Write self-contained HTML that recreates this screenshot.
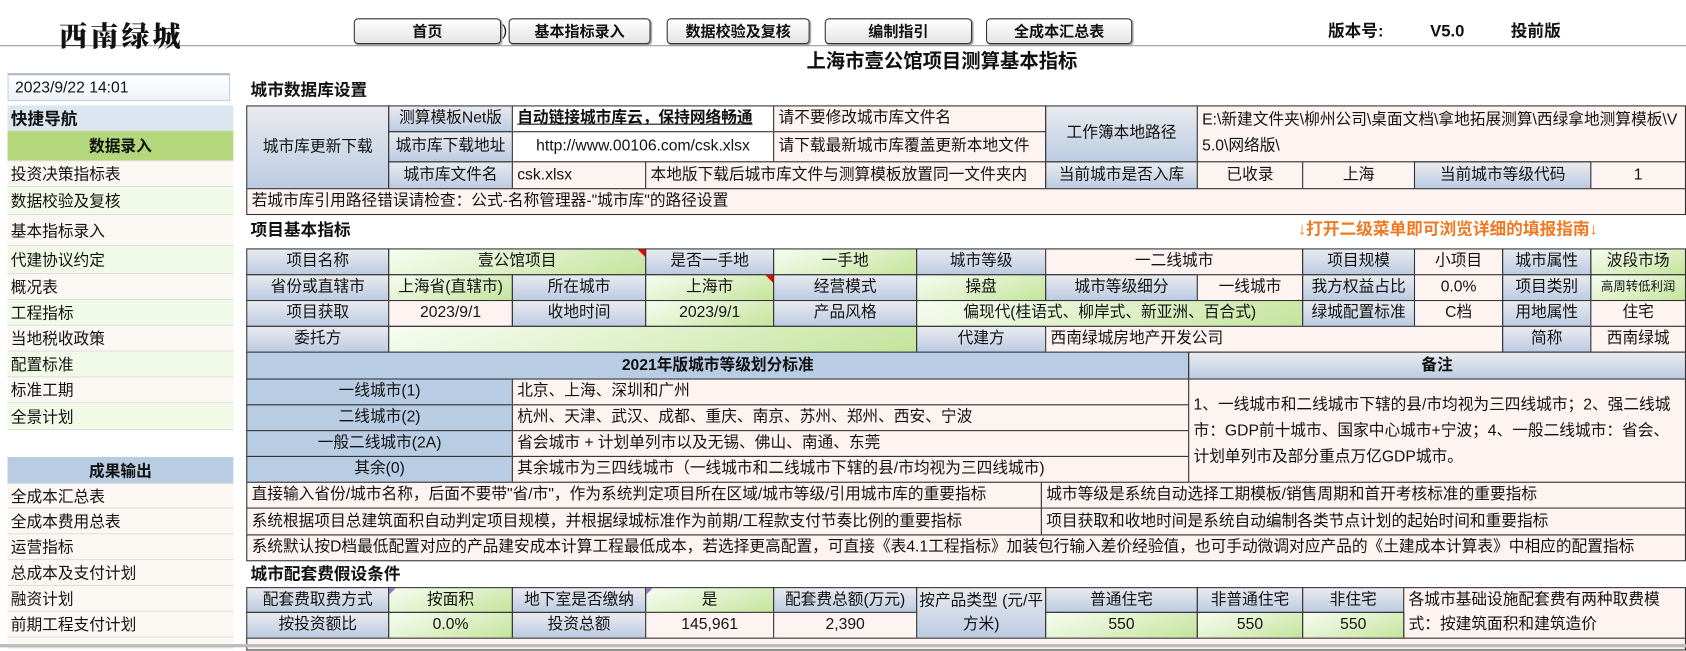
<!DOCTYPE html>
<html><head><meta charset="utf-8">
<style>
html,body{margin:0;padding:0;background:#fff;}
body{width:1686px;height:647px;overflow:hidden;position:relative;}
#w{position:absolute;left:0;top:0;width:1568px;height:602px;transform:scale(1.07526);transform-origin:0 0;font-family:"Liberation Sans","Noto Sans CJK SC",sans-serif;font-size:14.6px;color:#111;}
.c{position:absolute;box-sizing:border-box;border:1px solid #333;display:flex;align-items:center;justify-content:center;white-space:nowrap;overflow:hidden;line-height:1.15;}
.l{justify-content:flex-start;padding-left:4px;}
.h{background:linear-gradient(#e9ebef,#bccbe2);}
.b{background:#b8cce4;}
.v{background:#fdf4f2;}
.w{background:#fff;}
.g{background:linear-gradient(160deg,#f7fcf1 0%,#dff1c9 50%,#c3e49b 100%);}
.t{position:absolute;font-weight:bold;font-size:15.5px;white-space:nowrap;line-height:20px;}
.btn{position:absolute;top:17px;height:24px;box-sizing:border-box;border:1px solid #333;border-radius:4px;background:linear-gradient(#fff,#e4e4e4);display:flex;align-items:center;justify-content:center;font-size:14px;font-weight:bold;box-shadow:1px 1px 1px #999;}
.n{position:absolute;left:7px;width:210px;box-sizing:border-box;border-bottom:1px solid #ddd;padding-left:3px;display:flex;align-items:center;font-size:14.6px;}
.tri{position:absolute;width:0;height:0;border-top:7px solid #e00;border-left:7px solid transparent;}
.trp{position:absolute;width:0;height:0;border-top:6px solid #9a6fd0;border-right:6px solid transparent;}
</style></head><body><div id="w">
<div style="position:absolute;left:0;top:42px;width:1568px;height:1px;background:#999"></div>
<div style="position:absolute;left:55px;top:17px;font-family:'Noto Serif CJK SC',serif;font-weight:900;font-size:26px;letter-spacing:3px;line-height:32px">西南绿城</div>
<div class="btn" style="left:329px;width:137px">首页</div>
<div style="position:absolute;left:467px;top:20px;font-size:14px">)</div>
<div class="btn" style="left:473px;width:132px">基本指标录入</div>
<div class="btn" style="left:620px;width:133px">数据校验及复核</div>
<div class="btn" style="left:767px;width:137px">编制指引</div>
<div class="btn" style="left:917px;width:136px">全成本汇总表</div>
<div class="t" style="left:1235px;top:20px">版本号:</div>
<div class="t" style="left:1330px;top:20px">V5.0</div>
<div class="t" style="left:1405px;top:20px">投前版</div>
<div class="t" style="left:750px;top:47px;font-size:18px">上海市壹公馆项目测算基本指标</div>

<div style="position:absolute;left:7px;top:68px;width:207px;height:26px;box-sizing:border-box;border:1px solid #c5cfe0;border-top:2px solid #aab8d0;background:linear-gradient(#fff,#eef2f8);font-size:14.6px;padding:4px 0 0 6px">2023/9/22 14:01</div>
<div class="n" style="top:98px;height:24px;background:#dce6f1;font-weight:bold;font-size:15.5px">快捷导航</div>
<div class="n" style="top:122px;height:28px;background:#b3d77a;font-weight:bold;justify-content:center;padding:0">数据录入</div>
<div class="n" style="top:150px;height:24px;background:#fbf8f3">投资决策指标表</div>
<div class="n" style="top:174px;height:26px;background:#f1fae6">数据校验及复核</div>
<div class="n" style="top:200px;height:29px;background:#fbf8f3">基本指标录入</div>
<div class="n" style="top:229px;height:26px;background:#f1fae6">代建协议约定</div>
<div class="n" style="top:255px;height:24px;background:#fbf8f3">概况表</div>
<div class="n" style="top:279px;height:24px;background:#f1fae6">工程指标</div>
<div class="n" style="top:303px;height:24px;background:#fbf8f3">当地税收政策</div>
<div class="n" style="top:327px;height:24px;background:#f1fae6">配置标准</div>
<div class="n" style="top:351px;height:24px;background:#fbf8f3">标准工期</div>
<div class="n" style="top:375px;height:25px;background:#f1fae6">全景计划</div>
<div class="n" style="top:425px;height:25px;background:#b8cce4;font-weight:bold;justify-content:center;padding:0">成果输出</div>
<div class="n" style="top:450px;height:23px;background:#fbf8f3">全成本汇总表</div>
<div class="n" style="top:473px;height:24px;background:#fbf8f3">全成本费用总表</div>
<div class="n" style="top:497px;height:24px;background:#fbf8f3">运营指标</div>
<div class="n" style="top:521px;height:24px;background:#fbf8f3">总成本及支付计划</div>
<div class="n" style="top:545px;height:24px;background:#fbf8f3">融资计划</div>
<div class="n" style="top:569px;height:24px;background:#fbf8f3">前期工程支付计划</div>
<div class="n" style="top:593px;height:10px;background:#fbf8f3"></div>

<div class="t" style="left:233px;top:75px">城市数据库设置</div>
<div class="c h" style="left:229px;top:98px;width:133px;height:78px">城市库更新下载</div>
<div class="c h" style="left:361px;top:98px;width:116px;height:25px">测算模板Net版</div>
<div class="c w l" style="left:476px;top:98px;width:244px;height:25px;font-weight:bold;text-decoration:underline">自动链接城市库云，保持网络畅通</div>
<div class="c v l" style="left:719px;top:98px;width:254px;height:25px">请不要修改城市库文件名</div>
<div class="c h" style="left:361px;top:122px;width:116px;height:29px">城市库下载地址</div>
<div class="c w" style="left:476px;top:122px;width:244px;height:29px">http://www.00106.com/csk.xlsx</div>
<div class="c v l" style="left:719px;top:122px;width:254px;height:29px">请下载最新城市库覆盖更新本地文件</div>
<div class="c h" style="left:972px;top:98px;width:142px;height:53px">工作簿本地路径</div>
<div class="c v l" style="left:1113px;top:98px;width:455px;height:53px;white-space:normal;line-height:24px;align-items:flex-start;padding-top:1px;word-break:break-all">E:\新建文件夹\柳州公司\桌面文档\拿地拓展测算\西绿拿地测算模板\V5.0\网络版\</div>
<div class="c h" style="left:361px;top:150px;width:116px;height:26px">城市库文件名</div>
<div class="c v l" style="left:476px;top:150px;width:125px;height:26px">csk.xlsx</div>
<div class="c v l" style="left:600px;top:150px;width:373px;height:26px">本地版下载后城市库文件与测算模板放置同一文件夹内</div>
<div class="c h" style="left:972px;top:150px;width:142px;height:26px">当前城市是否入库</div>
<div class="c v" style="left:1113px;top:150px;width:99px;height:26px">已收录</div>
<div class="c v" style="left:1211px;top:150px;width:105px;height:26px">上海</div>
<div class="c h" style="left:1315px;top:150px;width:165px;height:26px">当前城市等级代码</div>
<div class="c v" style="left:1479px;top:150px;width:89px;height:26px">1</div>
<div class="c v l" style="left:229px;top:175px;width:1339px;height:25px">若城市库引用路径错误请检查：公式-名称管理器-"城市库"的路径设置</div>

<div class="t" style="left:233px;top:205px">项目基本指标</div>
<div class="t" style="left:1207px;top:204px;color:#f07820">↓打开二级菜单即可浏览详细的填报指南↓</div>

<div class="c h" style="left:229px;top:231px;width:133px;height:25px">项目名称</div>
<div class="c g" style="left:361px;top:231px;width:240px;height:25px">壹公馆项目</div>
<div class="tri" style="left:593px;top:232px"></div>
<div class="c h" style="left:600px;top:231px;width:120px;height:25px">是否一手地</div>
<div class="c g" style="left:719px;top:231px;width:134px;height:25px">一手地</div>
<div class="c h" style="left:852px;top:231px;width:121px;height:25px">城市等级</div>
<div class="c v" style="left:972px;top:231px;width:240px;height:25px">一二线城市</div>
<div class="c h" style="left:1211px;top:231px;width:105px;height:25px">项目规模</div>
<div class="c v" style="left:1315px;top:231px;width:83px;height:25px">小项目</div>
<div class="c h" style="left:1397px;top:231px;width:83px;height:25px">城市属性</div>
<div class="c g" style="left:1479px;top:231px;width:89px;height:25px">波段市场</div>

<div class="c h" style="left:229px;top:255px;width:133px;height:25px">省份或直辖市</div>
<div class="c g" style="left:361px;top:255px;width:116px;height:25px">上海省(直辖市)</div>
<div class="c h" style="left:476px;top:255px;width:125px;height:25px">所在城市</div>
<div class="c g" style="left:600px;top:255px;width:120px;height:25px">上海市</div>
<div class="tri" style="left:712px;top:256px"></div>
<div class="c h" style="left:719px;top:255px;width:134px;height:25px">经营模式</div>
<div class="c g" style="left:852px;top:255px;width:121px;height:25px">操盘</div>
<div class="c h" style="left:972px;top:255px;width:142px;height:25px">城市等级细分</div>
<div class="c v" style="left:1113px;top:255px;width:99px;height:25px">一线城市</div>
<div class="c h" style="left:1211px;top:255px;width:105px;height:25px">我方权益占比</div>
<div class="c v" style="left:1315px;top:255px;width:83px;height:25px">0.0%</div>
<div class="c h" style="left:1397px;top:255px;width:83px;height:25px">项目类别</div>
<div class="c g" style="left:1479px;top:255px;width:89px;height:25px;font-size:11.5px">高周转低利润</div>

<div class="c h" style="left:229px;top:279px;width:133px;height:25px">项目获取</div>
<div class="c v" style="left:361px;top:279px;width:116px;height:25px">2023/9/1</div>
<div class="c h" style="left:476px;top:279px;width:125px;height:25px">收地时间</div>
<div class="c g" style="left:600px;top:279px;width:120px;height:25px">2023/9/1</div>
<div class="c h" style="left:719px;top:279px;width:134px;height:25px">产品风格</div>
<div class="c g" style="left:852px;top:279px;width:360px;height:25px">偏现代(桂语式、柳岸式、新亚洲、百合式)</div>
<div class="c h" style="left:1211px;top:279px;width:105px;height:25px">绿城配置标准</div>
<div class="c v" style="left:1315px;top:279px;width:83px;height:25px">C档</div>
<div class="c h" style="left:1397px;top:279px;width:83px;height:25px">用地属性</div>
<div class="c v" style="left:1479px;top:279px;width:89px;height:25px">住宅</div>

<div class="c h" style="left:229px;top:303px;width:133px;height:25px">委托方</div>
<div class="c g" style="left:361px;top:303px;width:492px;height:25px"></div>
<div class="c h" style="left:852px;top:303px;width:121px;height:25px">代建方</div>
<div class="c v l" style="left:972px;top:303px;width:426px;height:25px">西南绿城房地产开发公司</div>
<div class="c h" style="left:1397px;top:303px;width:83px;height:25px">简称</div>
<div class="c v" style="left:1479px;top:303px;width:89px;height:25px">西南绿城</div>

<div class="c b" style="left:229px;top:327px;width:877px;height:26px;font-weight:bold">2021年版城市等级划分标准</div>
<div class="c h" style="left:1105px;top:327px;width:463px;height:26px;font-weight:bold">备注</div>
<div class="c b" style="left:229px;top:352px;width:248px;height:25px">一线城市(1)</div>
<div class="c v l" style="left:476px;top:352px;width:630px;height:25px">北京、上海、深圳和广州</div>
<div class="c b" style="left:229px;top:376px;width:248px;height:25px">二线城市(2)</div>
<div class="c v l" style="left:476px;top:376px;width:630px;height:25px">杭州、天津、武汉、成都、重庆、南京、苏州、郑州、西安、宁波</div>
<div class="c b" style="left:229px;top:400px;width:248px;height:25px">一般二线城市(2A)</div>
<div class="c v l" style="left:476px;top:400px;width:630px;height:25px">省会城市 + 计划单列市以及无锡、佛山、南通、东莞</div>
<div class="c b" style="left:229px;top:424px;width:248px;height:25px">其余(0)</div>
<div class="c v l" style="left:476px;top:424px;width:630px;height:25px">其余城市为三四线城市（一线城市和二线城市下辖的县/市均视为三四线城市)</div>
<div class="c v l" style="left:1105px;top:352px;width:463px;height:97px;white-space:normal;line-height:24px;padding-right:8px">1、一线城市和二线城市下辖的县/市均视为三四线城市；2、强二线城市：GDP前十城市、国家中心城市+宁波；4、一般二线城市：省会、计划单列市及部分重点万亿GDP城市。</div>

<div class="c v l" style="left:229px;top:448px;width:740px;height:25px">直接输入省份/城市名称，后面不要带"省/市"，作为系统判定项目所在区域/城市等级/引用城市库的重要指标</div>
<div class="c v l" style="left:968px;top:448px;width:600px;height:25px">城市等级是系统自动选择工期模板/销售周期和首开考核标准的重要指标</div>
<div class="c v l" style="left:229px;top:472px;width:740px;height:26px">系统根据项目总建筑面积自动判定项目规模，并根据绿城标准作为前期/工程款支付节奏比例的重要指标</div>
<div class="c v l" style="left:968px;top:472px;width:600px;height:26px">项目获取和收地时间是系统自动编制各类节点计划的起始时间和重要指标</div>
<div class="c v l" style="left:229px;top:497px;width:1339px;height:25px">系统默认按D档最低配置对应的产品建安成本计算工程最低成本，若选择更高配置，可直接《表4.1工程指标》加装包行输入差价经验值，也可手动微调对应产品的《土建成本计算表》中相应的配置指标</div>

<div class="t" style="left:233px;top:525px">城市配套费假设条件</div>
<div class="c h" style="left:229px;top:546px;width:133px;height:24px">配套费取费方式</div>
<div class="c g" style="left:361px;top:546px;width:116px;height:24px">按面积</div>
<div class="trp" style="left:362px;top:547px"></div>
<div class="c h" style="left:476px;top:546px;width:125px;height:24px">地下室是否缴纳</div>
<div class="c g" style="left:600px;top:546px;width:120px;height:24px">是</div>
<div class="trp" style="left:601px;top:547px"></div>
<div class="c h" style="left:719px;top:546px;width:134px;height:24px">配套费总额(万元)</div>
<div class="c h" style="left:852px;top:546px;width:121px;height:48px;white-space:normal;text-align:center;line-height:22px">按产品类型 (元/平方米)</div>
<div class="c h" style="left:972px;top:546px;width:142px;height:24px">普通住宅</div>
<div class="c h" style="left:1113px;top:546px;width:99px;height:24px">非普通住宅</div>
<div class="c h" style="left:1211px;top:546px;width:95px;height:24px">非住宅</div>
<div class="c v l" style="left:1305px;top:546px;width:263px;height:48px;white-space:normal;line-height:23px">各城市基础设施配套费有两种取费模式：按建筑面积和建筑造价</div>
<div class="c h" style="left:229px;top:569px;width:133px;height:25px">按投资额比</div>
<div class="c g" style="left:361px;top:569px;width:116px;height:25px">0.0%</div>
<div class="c h" style="left:476px;top:569px;width:125px;height:25px">投资总额</div>
<div class="c v" style="left:600px;top:569px;width:120px;height:25px">145,961</div>
<div class="c v" style="left:719px;top:569px;width:134px;height:25px">2,390</div>
<div class="c g" style="left:972px;top:569px;width:142px;height:25px">550</div>
<div class="c g" style="left:1113px;top:569px;width:99px;height:25px">550</div>
<div class="c g" style="left:1211px;top:569px;width:95px;height:25px">550</div>
<div class="c v" style="left:229px;top:593px;width:1339px;height:12px"></div>
<div style="position:absolute;left:0;top:599px;width:1568px;height:3px;background:#bbb"></div>
</div></body></html>
